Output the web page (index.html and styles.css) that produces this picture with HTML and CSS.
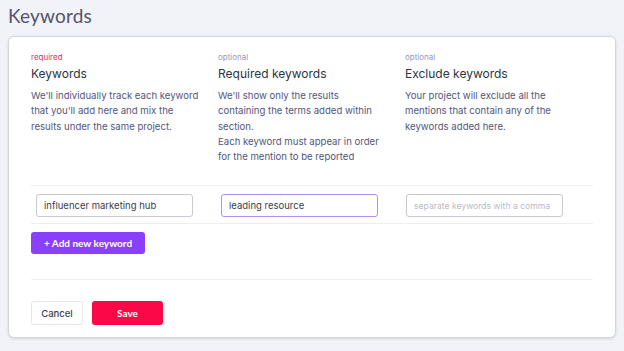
FILE: index.html
```html
<!DOCTYPE html>
<html lang="en">
<head>
  <meta charset="UTF-8" />
  <meta name="viewport" content="width=device-width, initial-scale=1.0"/>
  <title>Keywords</title>
  <link rel="stylesheet" href="styles.css">
</head>
<body>

  <h1 class="page-title">Keywords</h1>

  <div class="card">
    <div class="columns">
      <div class="col">
        <div class="tag tag-required">required</div>
        <h3>Keywords</h3>
        <p>We'll individually track each keyword that you'll add here and mix the results under the same project.</p>
      </div>
      <div class="col">
        <div class="tag">optional</div>
        <h3>Required keywords</h3>
        <p class="narrow">We'll show only the results containing the terms added within section.<br>Each keyword must appear in order for the mention to be reported</p>
      </div>
      <div class="col">
        <div class="tag">optional</div>
        <h3>Exclude keywords</h3>
        <p>Your project will exclude all the mentions that contain any of the keywords added here.</p>
      </div>
    </div>

    <div class="keyword-row">
      <div class="cell"><input type="text" value="influencer marketing hub"></div>
      <div class="cell"><input type="text" class="active" value="leading resource"></div>
      <div class="cell"><input type="text" placeholder="separate keywords with a comma"></div>
    </div>

    <button class="add-btn">+ Add new keyword</button>

    <div class="footer">
      <button class="cancel-btn">Cancel</button>
      <button class="save-btn">Save</button>
    </div>
  </div>

</body>
</html>
```

FILE: styles.css
```css
body {
  margin: 0;
  font-family: 'Inter', 'Liberation Sans', sans-serif;
  background: #f2f3f8;
  color: #4a4d68;
  height: 351px;
  overflow: hidden;
}

.page-title {
  margin: 0;
  padding: 4px 0 0 8px;
  height: 32px;
  font-family: 'Lato', 'Inter', sans-serif;
  font-weight: 400;
  font-size: 19px;
  color: #55546a;
  letter-spacing: 0.2px;
}

.card {
  margin-left: 8px;
  width: 562px;
  height: 300px;
  padding: 0 22px;
  background: #fff;
  border: 1px solid #d3d5dc;
  border-radius: 6px;
  box-shadow: 0 1px 3px rgba(0, 0, 0, 0.12);
}

.columns {
  display: grid;
  grid-template-columns: 187px 187px 187px;
  padding-top: 15px;
  height: 133px;
}

.tag {
  font-size: 8px;
  line-height: 10px;
  color: #9a98b8;
}

.tag-required {
  color: #ec2d66;
}

.col h3 {
  margin: 5px 0 7px;
  font-size: 12px;
  font-weight: 400;
  line-height: 14px;
  color: #2d3440;
}

.col p {
  margin: 0;
  width: 172px;
  font-size: 9.6px;
  line-height: 15.3px;
  color: #52557a;
}

.col p.narrow {
  width: 167px;
}

.keyword-row {
  display: grid;
  grid-template-columns: 187px 187px 187px;
  border-top: 1px solid #eceef2;
  border-bottom: 1px solid #eceef2;
  height: 37px;
  align-items: center;
}

.cell {
  padding-left: 5px;
}

.cell:nth-child(2) {
  padding-left: 3px;
}

.cell:nth-child(3) {
  padding-left: 1px;
}

input {
  box-sizing: border-box;
  width: 157px;
  height: 23px;
  padding: 0 7px;
  border: 1px solid #c9c9cf;
  border-radius: 3px;
  font-family: 'Inter', sans-serif;
  font-size: 9.5px;
  color: #3a3d4a;
  outline: none;
}

input.active {
  border-color: #b58ef0;
}

input::placeholder {
  color: #b9bbc4;
  font-size: 8.6px;
}

.add-btn {
  margin-top: 8px;
  width: 114px;
  height: 22px;
  background: #8a3ffc;
  color: #fff;
  border: none;
  border-radius: 3px;
  font-family: 'Lato', 'Inter', sans-serif;
  font-weight: 700;
  font-size: 10px;
  cursor: pointer;
}

.footer {
  margin-top: 25px;
  border-top: 1px solid #eef0f3;
  padding-top: 21px;
  display: flex;
  gap: 9px;
}

.cancel-btn {
  width: 52px;
  height: 24px;
  background: #fff;
  border: 1px solid #e6e7ec;
  border-radius: 3px;
  color: #3d3f4d;
  font-family: 'Inter', sans-serif;
  font-weight: 500;
  font-size: 9.5px;
  cursor: pointer;
}

.save-btn {
  width: 71px;
  height: 24px;
  background: #fb0848;
  border: none;
  border-radius: 3px;
  color: #fff;
  font-family: 'Lato', 'Inter', sans-serif;
  font-weight: 700;
  font-size: 10px;
  cursor: pointer;
}
```
